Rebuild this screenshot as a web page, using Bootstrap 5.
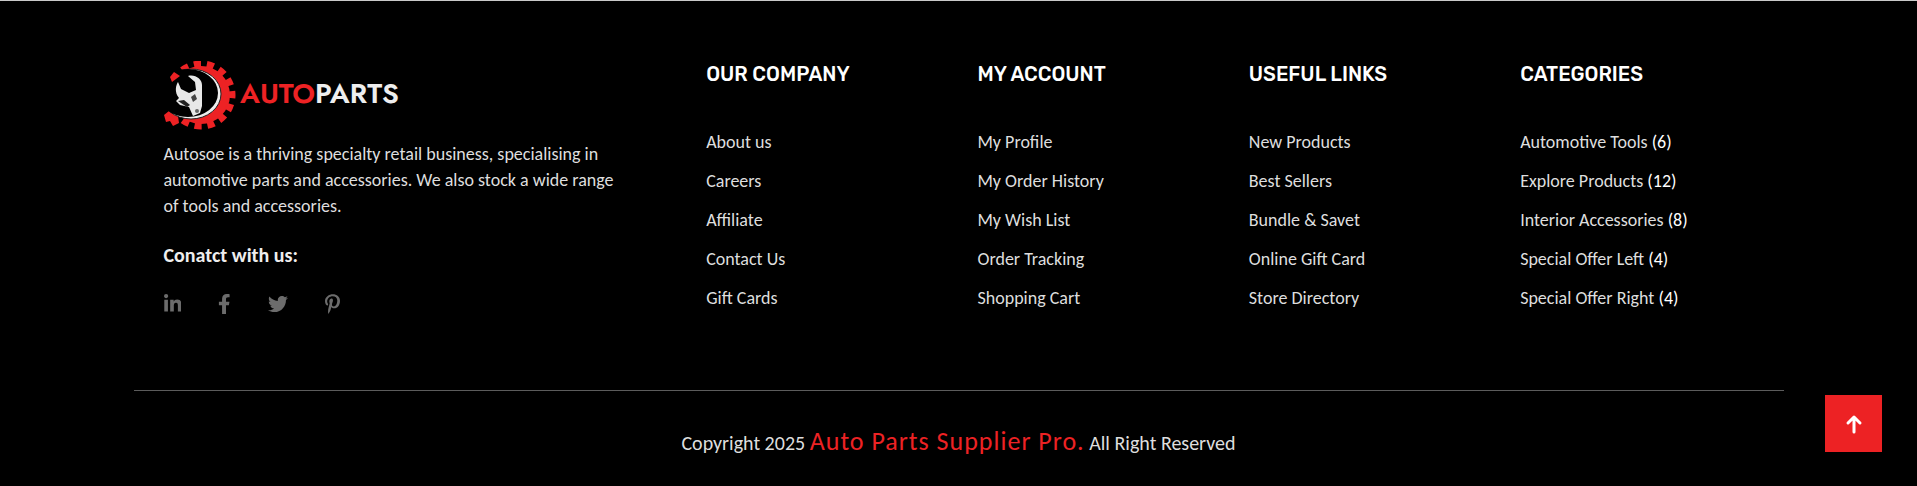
<!DOCTYPE html>
<html lang="en">
<head>
<meta charset="utf-8">
<meta name="viewport" content="width=device-width, initial-scale=1">
<title>Auto Parts Supplier Pro</title>
<link href="https://cdn.jsdelivr.net/npm/bootstrap@5.3.0/dist/css/bootstrap.min.css" rel="stylesheet">
<style>
body{background:#000;color:#dedede;font-family:Carlito,Lato,sans-serif;font-size:18px;line-height:26px}
a{color:inherit;text-decoration:none}
a:hover{color:#ed2224}
.site-footer{border-top:1px solid #c9c9c9;padding-top:60px}
.footer-wrap{max-width:1650px}
.footer-cols{--bs-gutter-x:38px;margin:0 11px 76px}
.brand-logo{width:240px;height:70px}
.footer-title{font-family:Rubik,Roboto,sans-serif;font-size:20px;line-height:26px;font-weight:500;color:#fff;margin-bottom:42px}
.footer-list{display:grid;gap:13px}
.about-text{max-width:450px;margin:10px 0 23px}
.connect-title{font-size:20px;line-height:26px;font-weight:700;color:#eee;margin-bottom:26px}
.social{color:#6c6c6c;gap:37px}
.social svg{display:block;height:20px;fill:currentColor}
.footer-rule{border-top:1px solid #5c5c5c;opacity:1;margin:0}
.copyright{font-size:20px;line-height:32px;padding:34px 0 24px}
.copyright a{color:#ed2224;font-size:26px;letter-spacing:1px}
.to-top{width:57px;height:57px;right:35px;bottom:34px;background:#ed2224;color:#fff}
.to-top:hover{background:#c91b1d;color:#fff}
</style>
</head>
<body>
<footer class="site-footer">
<div class="footer-wrap container-fluid px-0">
<div class="row footer-cols">
<section class="col-12 col-lg-4">
<a href="#" aria-label="Autoparts home"><svg class="brand-logo d-block" viewBox="0 0 240 70" aria-hidden="true">
<circle cx="37" cy="34" r="29" fill="#ed2224"/>
<circle cx="37" cy="34" r="31" fill="none" stroke="#ed2224" stroke-width="7" pathLength="150" stroke-dasharray="5.500 4.500" stroke-dashoffset="3"/>
<path d="m0 54 5-4 9 5 1 7-6 3-3-5-4 1z" fill="#ed2224"/>
<ellipse cx="27" cy="33" rx="30" ry="25" fill="#eee" stroke="#222"/>
<ellipse cx="24" cy="32" rx="30" ry="24"/>
<path d="M-4 18H5L2 50H-4Z"/>
<path d="m6 16 4-5 6 4-8 6z" fill="#ed2224"/>
<path d="M24 15c7-2 14 3 14 9v21l-2 7-7 3-4-9-9-2-4-4 3-3c-5-6-3-13-1-16l3 7 8 4 7-3-1-8z" fill="#e8e8e8"/>
<path d="m14 40 6-1 6 5-3 2z" fill="#222"/><path d="m27 36 4-3 2 5-4 3z" fill="#444"/><circle cx="33" cy="50" r="2" fill="#666"/>
<text x="76" y="42" font-family="Jost,Lato,sans-serif" font-size="28" font-weight="600" fill="#ed2224">AUTO<tspan fill="#eee">PARTS</tspan></text>
</svg></a>
<p class="about-text">Autosoe is a thriving specialty retail business, specialising in automotive parts and accessories. We also stock a wide range of tools and accessories.</p>
<h2 class="connect-title">Conatct with us:</h2>
<div class="d-flex social">
<a href="#" aria-label="LinkedIn"><svg viewBox="0 0 448 512"><path d="M100.300 448H7.400V148.900h92.900zM53.800 108.100C24.100 108.100 0 83.500 0 53.800a53.800 53.800 0 0 1 107.600 0c0 29.700-24.100 54.300-53.800 54.300zM447.900 448h-92.700V302.400c0-34.700-.7-79.200-48.300-79.200-48.300 0-55.700 37.700-55.700 76.700V448h-92.800V148.900h89.100v40.800h1.300c12.400-23.500 42.700-48.300 87.900-48.300 94 0 111.300 61.900 111.300 142.300V448z"/></svg></a>
<a href="#" aria-label="Facebook"><svg viewBox="0 0 320 512"><path d="M279.100 288l14.200-92.700h-88.900v-60.100c0-25.400 12.400-50.100 52.200-50.100h40.400V6.300S260.400 0 225.400 0c-73.200 0-121.100 44.400-121.100 124.700v70.600H22.900V288h81.400v224h100.200V288z"/></svg></a>
<a href="#" aria-label="Twitter"><svg viewBox="0 0 512 512"><path d="M459.400 151.700c.3 4.500.3 9.100.3 13.600 0 138.700-105.600 298.600-298.600 298.600-59.500 0-114.700-17.200-161.100-47.100 8.400 1 16.600 1.300 25.300 1.300 49.100 0 94.200-16.600 130.300-44.800-46.100-1-84.800-31.200-98.100-72.800 6.500 1 13 1.600 19.800 1.600 9.400 0 18.800-1.300 27.600-3.600-48.100-9.700-84.100-52-84.100-103v-1.300c14 7.800 30.200 12.700 47.400 13.300-28.300-18.800-46.800-51-46.800-87.400 0-19.500 5.200-37.400 14.300-53 51.700 63.700 129.300 105.300 216.400 109.800-1.600-7.800-2.600-15.900-2.600-24 0-57.800 46.800-104.900 104.900-104.900 30.200 0 57.500 12.700 76.700 33.100 23.700-4.500 46.500-13.300 66.600-25.300-7.800 24.400-24.400 44.800-46.100 57.800 21.100-2.300 41.600-8.100 60.400-16.200-14.300 20.800-32.200 39.300-52.600 54.300z"/></svg></a>
<a href="#" aria-label="Pinterest"><svg viewBox="0 0 384 512"><path d="M204 6.500C101.400 6.500 0 74.900 0 185.600 0 256 39.600 296 63.600 296c9.900 0 15.600-27.600 15.600-35.400 0-9.300-23.700-29.100-23.700-67.800 0-80.400 61.200-137.400 140.400-137.400 68.100 0 118.500 38.700 118.500 109.800 0 53.100-21.300 152.700-90.300 152.700-24.900 0-46.200-18-46.200-43.800 0-37.800 26.400-74.400 26.400-113.400 0-66.200-93.900-54.200-93.900 25.800 0 16.800 2.100 35.400 9.600 50.700-13.800 59.400-42 147.900-42 209.100 0 18.900 2.700 37.500 4.500 56.400 3.400 3.800 1.700 3.400 6.900 1.500 50.400-69 48.600-82.500 71.400-172.800 12.300 23.400 44.100 36 69.300 36 106.200 0 153.900-103.500 153.900-196.800C384 71.300 298.200 6.500 204 6.500z"/></svg></a>
</div>
</section>
<nav class="col-6 col-lg-2" aria-label="Our company">
<h2 class="footer-title">OUR COMPANY</h2>
<ul class="footer-list list-unstyled mb-0"><li><a href="#">About us</a></li><li><a href="#">Careers</a></li><li><a href="#">Affiliate</a></li><li><a href="#">Contact Us</a></li><li><a href="#">Gift Cards</a></li></ul>
</nav>
<nav class="col-6 col-lg-2" aria-label="My account">
<h2 class="footer-title">MY ACCOUNT</h2>
<ul class="footer-list list-unstyled mb-0"><li><a href="#">My Profile</a></li><li><a href="#">My Order History</a></li><li><a href="#">My Wish List</a></li><li><a href="#">Order Tracking</a></li><li><a href="#">Shopping Cart</a></li></ul>
</nav>
<nav class="col-6 col-lg-2" aria-label="Useful links">
<h2 class="footer-title">USEFUL LINKS</h2>
<ul class="footer-list list-unstyled mb-0"><li><a href="#">New Products</a></li><li><a href="#">Best Sellers</a></li><li><a href="#">Bundle &amp; Savet</a></li><li><a href="#">Online Gift Card</a></li><li><a href="#">Store Directory</a></li></ul>
</nav>
<nav class="col-6 col-lg-2" aria-label="Categories">
<h2 class="footer-title">CATEGORIES</h2>
<ul class="footer-list list-unstyled mb-0"><li><a href="#">Automotive Tools</a> <span class="text-white">(6)</span></li><li><a href="#">Explore Products</a> <span class="text-white">(12)</span></li><li><a href="#">Interior Accessories</a> <span class="text-white">(8)</span></li><li><a href="#">Special Offer Left</a> <span class="text-white">(4)</span></li><li><a href="#">Special Offer Right</a> <span class="text-white">(4)</span></li></ul>
</nav>
</div>
<hr class="footer-rule">
<p class="copyright text-center mb-0">Copyright 2025 <a href="#">Auto Parts Supplier Pro.</a> All Right Reserved</p>
</div>
</footer>
<button type="button" class="to-top btn rounded-0 border-0 p-0 position-fixed d-flex align-items-center justify-content-center" aria-label="Back to top"><svg width="18" height="20" viewBox="0 0 18 20" fill="none" stroke="currentColor" stroke-width="3" stroke-linecap="round" stroke-linejoin="round"><path d="M9 18V3M3 9l6-6 6 6"/></svg></button>
<script src="https://cdn.jsdelivr.net/npm/bootstrap@5.3.0/dist/js/bootstrap.bundle.min.js"></script>
</body>
</html>
